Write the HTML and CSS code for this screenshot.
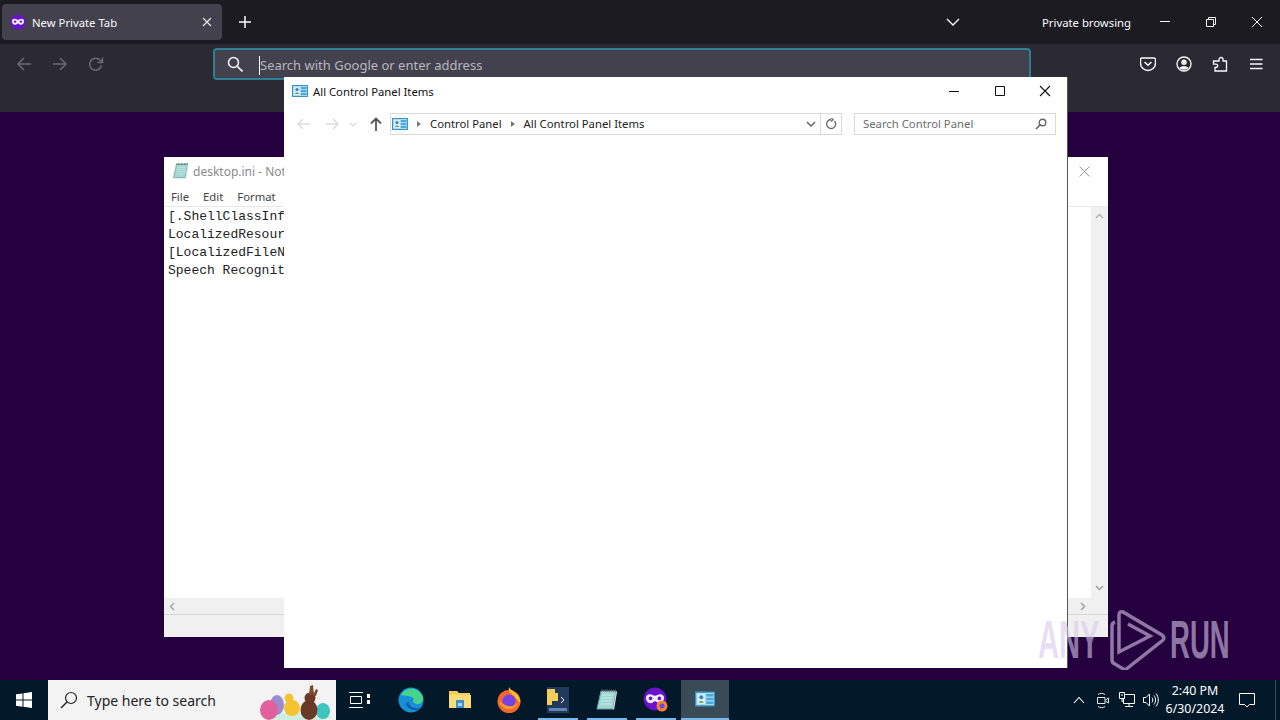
FILE: index.html
```html
<!DOCTYPE html>
<html>

<head>
    <title>New Private Tab</title>
    <link rel="stylesheet" href="styles.css">
</head>

<body>
    <svg class="defs" width="0" height="0">
        <symbol id="cpanel" viewBox="0 0 16 16">
            <rect x="0.5" y="2.5" width="15" height="11" fill="#a7dcf5" stroke="#3b93c4" />
            <rect x="2" y="4" width="6" height="8" fill="#d3eefa" />
            <circle cx="5" cy="6.5" r="1.6" fill="#3f7fb0" />
            <path d="M3 11c.5-2 3.5-2 4 0z" fill="#6b9f3c" />
            <rect x="9" y="4" width="5.5" height="2" fill="#4aa8dc" />
            <rect x="9" y="7" width="5.5" height="2" fill="#4aa8dc" />
            <rect x="9" y="10" width="5.5" height="2" fill="#4aa8dc" />
        </symbol>
        <symbol id="mask" viewBox="0 0 20 20">
            <circle cx="10" cy="10" r="9.5" fill="#6a12c9" />
            <path d="M2.5 9c0-2 1.5-3 3.2-3 1.800 0 3 1.300 4.300 1.300S12.500 6 14.300 6c1.700 0 3.200 1 3.200 3 0 2.500-1.500 4.500-3.700 4.500-1.900 0-2.700-1.700-3.800-1.700s-1.900 1.700-3.800 1.700C4 13.500 2.500 11.500 2.500 9z" fill="#f4ecff" />
            <circle cx="6.3" cy="9.5" r="1.5" fill="#6a12c9" />
            <circle cx="13.7" cy="9.5" r="1.5" fill="#6a12c9" />
        </symbol>
        <symbol id="notepad" viewBox="0 0 24 24">
            <path d="M6 3h15l-3 18H2z" fill="#9fd6d2" stroke="#6f9a9a" />
            <path d="M7 7h11M6.5 10h11M6 13h11M5.500 16h11" stroke="#c8ebe8" fill="none" />
            <path d="M6 2.500h15" stroke="#555" stroke-dasharray="1 1" stroke-width="2" fill="none" />
            <path d="M18 21l3-18 1 1-3 18z" fill="#e4e4e4" />
        </symbol>
    </svg>

    <div class="browser">
        <div class="tabstrip">
            <div class="tab">
                <svg class="tab-icon" width="16" height="16"><use href="#mask" /></svg>
                <span class="tab-title">New Private Tab</span>
                <svg class="tab-close" width="10" height="10" viewBox="0 0 10 10"><path d="M1 1l8 8M9 1l-8 8" stroke="#e6e6e8" stroke-width="1.2" /></svg>
            </div>
            <svg class="new-tab" width="14" height="14" viewBox="0 0 14 14"><path d="M7 1v12M1 7h12" stroke="#fbfbfe" stroke-width="1.5" /></svg>
            <svg class="tab-list" width="14" height="8" viewBox="0 0 14 8"><path d="M1 1l6 6 6-6" stroke="#fbfbfe" stroke-width="1.4" fill="none" /></svg>
            <span class="private-label">Private browsing</span>
            <div class="caption">
                <svg width="46" height="44" viewBox="0 0 46 44"><path d="M18 21.500h10" stroke="#f2f2f2" /></svg>
                <svg width="46" height="44" viewBox="0 0 46 44"><path d="M18.500 19.500h7v7h-7zM20.500 19.500v-2h7v7h-2" stroke="#f2f2f2" fill="none" /></svg>
                <svg width="46" height="44" viewBox="0 0 46 44"><path d="M18 17l10 10M28 17L18 27" stroke="#f2f2f2" /></svg>
            </div>
        </div>

        <div class="toolbar">
            <div class="nav-row">
                <svg class="nav-btn" width="16" height="16" viewBox="0 0 16 16"><path d="M15 8H2M8 2L2 8l6 6" stroke="#6c6b73" stroke-width="1.5" fill="none" /></svg>
                <svg class="nav-btn" width="16" height="16" viewBox="0 0 16 16"><path d="M1 8h13M8 2l6 6-6 6" stroke="#6c6b73" stroke-width="1.5" fill="none" /></svg>
                <svg class="nav-btn" width="16" height="16" viewBox="0 0 16 16"><path d="M13.500 9.500A6 6 0 1 1 12 4l2 2M14.500 1.500V6.500H9.500" stroke="#6c6b73" stroke-width="1.5" fill="none" /></svg>
                <div class="urlbar">
                    <svg class="url-icon" width="16" height="16" viewBox="0 0 16 16"><circle cx="6.500" cy="6.500" r="5" stroke="#fbfbfe" stroke-width="1.5" fill="none" /><path d="M10.500 10.500l5 5" stroke="#fbfbfe" stroke-width="1.6" /></svg>
                    <span class="url-text">Search with Google or enter address</span>
                </div>
                <div class="toolbar-right">
                    <svg width="16" height="16" viewBox="0 0 16 16"><path d="M2 2h12a1.500 1.500 0 0 1 1.500 1.500V7a7.500 7.500 0 0 1-15 0V3.500A1.500 1.500 0 0 1 2 2z" stroke="#fbfbfe" stroke-width="1.4" fill="none" /><path d="M4.500 6L8 9.300 11.500 6" stroke="#fbfbfe" stroke-width="1.5" fill="none" /></svg>
                    <svg width="16" height="16" viewBox="0 0 16 16"><circle cx="8" cy="8" r="7" stroke="#fbfbfe" stroke-width="1.4" fill="none" /><circle cx="8" cy="6.300" r="2.700" fill="#fbfbfe" /><path d="M3.500 12c1-2.200 8-2.200 9 0-2 2.200-7 2.200-9 0z" fill="#fbfbfe" /></svg>
                    <svg width="16" height="16" viewBox="0 0 16 16"><path d="M7 5V3.500a2 2 0 0 1 4 0V5h3.500v10H3v-3.500h1a1.700 1.700 0 0 0 0-3.400H1.500V5z" stroke="#fbfbfe" stroke-width="1.3" fill="none" /></svg>
                    <svg width="16" height="16" viewBox="0 0 16 16"><path d="M2 3.500h12.500M2 8h12.500M2 12.500h12.500" stroke="#fbfbfe" stroke-width="1.4" /></svg>
                </div>
            </div>
        </div>
        <div class="page"></div>
    </div>

    <div class="taskbar">
        <div class="start">
            <svg width="16" height="16" viewBox="0 0 16 16"><path d="M0 2.300l6.500-.9v6.200H0zM7.500 1.300L16 0v7.600H7.500zM0 8.500h6.500v6.200L0 13.800zM7.500 8.500H16V16l-8.500-1.200z" fill="#fff" /></svg>
        </div>
        <div class="search">
            <svg width="18" height="18" viewBox="0 0 18 18"><circle cx="11" cy="7" r="5.500" stroke="#222" stroke-width="1.2" fill="none" /><path d="M7 11l-6 6" stroke="#222" stroke-width="1.4" /></svg>
            <span class="search-text">Type here to search</span>
            <svg class="eggs" width="76" height="36" viewBox="0 0 76 36">
                <ellipse cx="42" cy="33" rx="32" ry="4" fill="#cdeee0" />
                <ellipse cx="19" cy="21" rx="7" ry="10" fill="#9a8ccf" />
                <ellipse cx="11" cy="26" rx="9" ry="10" fill="#e2609e" />
                <circle cx="34" cy="24" r="8" fill="#f5c332" />
                <circle cx="31" cy="14" r="4.500" fill="#f5c332" />
                <ellipse cx="65" cy="27" rx="7" ry="8" fill="#3fc4c0" />
                <ellipse cx="51" cy="26" rx="8.500" ry="10" fill="#6b3a26" />
                <circle cx="52" cy="14" r="5.500" fill="#6b3a26" />
                <path d="M51 11l1-9 3-1 1 10zM55 11l3-6 2 1-2 6z" fill="#7d4a30" />
            </svg>
        </div>
        <div class="task-item task-view">
            <svg width="24" height="16" viewBox="0 0 24 16"><path d="M1 .5h14M1 15.500h14M2.500 4.500h11v7h-11z" stroke="#fff" fill="none" /><path d="M19 2h3v4h-3zM19 8h3v4h-3z" fill="#fff" /></svg>
        </div>
        <div class="task-item">
            <svg width="26" height="26" viewBox="0 0 26 26">
                <circle cx="13" cy="13" r="12.500" fill="#1590d8" />
                <path d="M3 8C6 1 20-2 25 10c1 5-3 8-7 7-3-1-4-3-2-5-3-4-10-3-13-4z" fill="#46d38a" />
                <path d="M8 16c0 4 4 7 9 7 2 0 4-1 5-2-6 1-11-1-11-6z" fill="#0b5fa8" />
            </svg>
        </div>
        <div class="task-item">
            <svg width="22" height="20" viewBox="0 0 22 20">
                <path d="M0 1h8l2 2h11v15H0z" fill="#f2cf5b" />
                <rect x="0" y="5" width="22" height="13" fill="#f8dc78" />
                <rect x="7" y="10" width="8" height="8" fill="#3c8fd0" />
                <rect x="9" y="13" width="4" height="3" fill="#a9d8f5" />
            </svg>
        </div>
        <div class="task-item">
            <svg width="24" height="26" viewBox="0 0 24 26">
                <circle cx="12" cy="14.500" r="11.500" fill="#f4662d" />
                <path d="M12 0c1 3 7 5 10 10 2 4 1 6 1 6L16 8c-2-2-5-3-4-8z" fill="#fbc02d" />
                <circle cx="12" cy="14" r="6.500" fill="#7542e5" />
                <path d="M1 13c2 6 7 10 13 9 4-1 7-4 8-8-2 4-7 6-11 5-4-1-7-3-10-6z" fill="#ff9c2a" />
            </svg>
        </div>
        <div class="task-item running">
            <svg width="24" height="28" viewBox="0 0 24 28">
                <rect x="1" y="1" width="22" height="26" fill="#213a5c" />
                <rect x="3" y="22" width="18" height="3" fill="#5f86b5" />
                <path d="M1 3h8v4h3v8H6v4H1z" fill="#f2cf5b" />
                <path d="M15 11l3 3-3 3" stroke="#fff" fill="none" />
            </svg>
        </div>
        <div class="task-item running">
            <svg width="24" height="24"><use href="#notepad" /></svg>
        </div>
        <div class="task-item running">
            <svg width="26" height="26" viewBox="0 0 26 26">
                <use href="#mask" width="24" height="24" />
                <circle cx="19" cy="19" r="5.500" fill="#f4812d" />
                <circle cx="19" cy="19" r="2.500" fill="#7542e5" />
            </svg>
        </div>
        <div class="task-item active">
            <svg width="20" height="20"><use href="#cpanel" /></svg>
        </div>
        <div class="tray">
            <svg width="16" height="8" viewBox="-2 0 16 8"><path d="M1 7l5-5.500L11 7" stroke="#fff" stroke-width="1.1" fill="none" /></svg>
            <svg width="16" height="16" viewBox="-1 0 16 16"><path d="M1.500 5.500h7.500v6H1.500zM9.500 8l3-2v5l-3-2M2 2.500c2-1.500 5-1.500 7 0M2 14.500c2 1.500 5 1.500 7 0" stroke="#e8e8e8" fill="none" /></svg>
            <svg width="16" height="16" viewBox="0 0 16 16"><path d="M4.500 2.500h11v9h-11zM10 11.500v3M6 14.500h8" stroke="#fff" fill="none" /><path d="M.5 .5h5v6h-5z" fill="#03192a" stroke="#fff" /><path d="M2 3h2M3 6.500v3h2" stroke="#fff" fill="none" /></svg>
            <svg width="16" height="16" viewBox="0 0 16 16"><path d="M.5 5.500h2.500L6.500 2v12L3 10.500H.5z" stroke="#fff" fill="none" /><path d="M9 5.500c1 1.500 1 3.500 0 5M11 3.500c2 2.500 2 6.500 0 9M13 1.500c3 3.500 3 9.500 0 13" stroke="#fff" fill="none" /></svg>
        </div>
        <div class="clock">
            <span>2:40 PM</span>
            <span>6/30/2024</span>
        </div>
        <div class="notify">
            <svg width="16" height="15" viewBox="0 0 16 15"><path d="M.5 .5h15v11h-5L8 14l-2.500-2.500h-5z" stroke="#fff" fill="none" /></svg>
        </div>
        <div class="show-desktop"></div>
    </div>

    <!-- notepad sits behind the control panel -->
    <div class="window notepad">
        <div class="np-title">
            <svg width="18" height="18"><use href="#notepad" /></svg>
            <span class="np-name">desktop.ini - Notepad</span>
            <svg class="np-close" width="11" height="11" viewBox="0 0 11 11"><path d="M.5 .5l10 10M10.500 .5l-10 10" stroke="#9a9a9a" /></svg>
        </div>
        <div class="np-menu">
            <span>File</span>
            <span>Edit</span>
            <span>Format</span>
        </div>
        <div class="np-body">
            <pre class="np-text">[.ShellClassInfo]
LocalizedResourceName=@%SystemRoot%\system32\shell32.dll
[LocalizedFileNames]
Speech Recognition.lnk=@%SystemRoot%\system32\speech</pre>
            <div class="np-vscroll">
                <svg width="9" height="6" viewBox="0 0 9 6"><path d="M1 5l3.500-3.500L8 5" stroke="#b5b5b5" stroke-width="1.5" fill="none" /></svg>
                <svg width="9" height="6" viewBox="0 0 9 6"><path d="M1 1l3.500 3.500L8 1" stroke="#a0a0a0" stroke-width="1.5" fill="none" /></svg>
            </div>
        </div>
        <div class="np-hscroll">
            <svg width="6" height="9" viewBox="0 0 6 9"><path d="M5 1L1.500 4.500 5 8" stroke="#a8a8a8" stroke-width="1.5" fill="none" /></svg>
            <svg width="6" height="9" viewBox="0 0 6 9"><path d="M1 1l3.500 3.500L1 8" stroke="#a0a0a0" stroke-width="1.5" fill="none" /></svg>
        </div>
        <div class="np-status"></div>
    </div>

    <div class="window cpanel">
        <div class="cp-title">
            <svg width="16" height="16"><use href="#cpanel" /></svg>
            <span class="cp-name">All Control Panel Items</span>
            <div class="cp-caption">
                <svg width="46" height="28" viewBox="0 0 46 28"><path d="M18 14.500h10" stroke="#111" /></svg>
                <svg width="46" height="28" viewBox="0 0 46 28"><path d="M18.500 9.500h9v9h-9z" stroke="#111" fill="none" /></svg>
                <svg width="46" height="28" viewBox="0 0 46 28"><path d="M17 9l10 10M27 9L17 19" stroke="#111" stroke-width="1.1" /></svg>
            </div>
        </div>
        <div class="cp-nav">
            <svg class="cp-back" width="14" height="12" viewBox="0 0 14 12"><path d="M14 6H2M7 1L2 6l5 5" stroke="#dcdcdc" stroke-width="1.5" fill="none" /></svg>
            <svg class="cp-fwd" width="14" height="12" viewBox="0 0 14 12"><path d="M0 6h12M7 1l5 5-5 5" stroke="#dcdcdc" stroke-width="1.5" fill="none" /></svg>
            <svg class="cp-down" width="8" height="5" viewBox="0 0 8 5"><path d="M1 1l3 3 3-3" stroke="#dcdcdc" stroke-width="1.2" fill="none" /></svg>
            <svg class="cp-up" width="12" height="14" viewBox="0 0 12 14"><path d="M6 14V2M1 6.500l5-5 5 5" stroke="#555" stroke-width="1.8" fill="none" /></svg>
            <div class="crumbs">
                <svg width="16" height="16"><use href="#cpanel" /></svg>
                <span class="crumb-sep"></span>
                <span class="crumb">Control Panel</span>
                <span class="crumb-sep"></span>
                <span class="crumb">All Control Panel Items</span>
                <svg class="crumb-drop" width="10" height="6" viewBox="0 0 10 6"><path d="M1 1l4 4 4-4" stroke="#666" stroke-width="1.5" fill="none" /></svg>
                <div class="crumb-refresh">
                    <svg width="12" height="12" viewBox="0 0 12 12"><path d="M9.500 3a4.500 4.500 0 1 1-3.500-1.500M6 0l2 1.500L6 3.500" stroke="#666" stroke-width="1.3" fill="none" /></svg>
                </div>
            </div>
            <div class="cp-search">
                <span class="crumb">Search Control Panel</span>
                <svg width="12" height="12" viewBox="0 0 12 12"><circle cx="7.500" cy="4.500" r="3.300" stroke="#666" stroke-width="1.4" fill="none" /><path d="M5 7l-4 4" stroke="#666" stroke-width="1.7" /></svg>
            </div>
        </div>
    </div>

    <div class="watermark">
        <span class="wm-text wm-any">ANY</span>
        <svg width="56" height="60" viewBox="0 0 56 60"><path d="M5 12Q2 13 2 16V50Q2 53 5 54L15 60 53 30Q55 27 52 25L13 2Q9 1 9 5V42L40 26 18 14" stroke="currentColor" stroke-width="3.5" fill="none" /></svg>
        <span class="wm-text wm-run">RUN</span>
    </div>
</body>

</html>
```

FILE: styles.css
```css
html,
body {
    margin: 0;
    padding: 0;
}

body {
    position: relative;
    width: 1280px;
    height: 720px;
    overflow: hidden;
    display: flex;
    flex-direction: column;
    font-family: "Noto Sans", "Open Sans", sans-serif;
    font-size: 11.3px;
    background-color: #25003e;
}

svg {
    display: block;
    flex-shrink: 0;
}

.defs {
    position: absolute;
}

.browser {
    flex: 1;
    display: flex;
    flex-direction: column;
}

.tabstrip {
    height: 44px;
    display: flex;
    align-items: center;
    background-color: #1c1b22;
    color: #fbfbfe;
}

.tab {
    width: 220px;
    height: 36px;
    margin-left: 2px;
    padding: 0 10px 0 8px;
    box-sizing: border-box;
    flex-shrink: 0;
    display: flex;
    align-items: center;
    border-radius: 4px;
    background-color: #42414d;
}

.tab-icon {
    margin-right: 6px;
}

.tab-title {
    flex: 1;
}

.new-tab {
    margin-left: 16px;
}

.tab-list {
    margin-left: 694px;
}

.private-label {
    width: 88px;
    margin-left: 82px;
    flex-shrink: 0;
    white-space: nowrap;
}

.caption {
    display: flex;
    margin-left: 12px;
}

.toolbar {
    height: 68px;
    background-color: #2b2a33;
}

.nav-row {
    display: flex;
    align-items: center;
    height: 40px;
}

.nav-btn {
    margin-left: 20px;
}

.nav-btn:first-child {
    margin-left: 16px;
}

.urlbar {
    width: 818px;
    height: 32px;
    margin-left: 109px;
    padding-left: 12px;
    box-sizing: border-box;
    display: flex;
    align-items: center;
    border: 2px solid #2d7f93;
    border-radius: 4px;
    background-color: #42414d;
}

.url-text {
    margin: 2px 0 0 16px;
    border-left: 1px solid #fbfbfe;
    font-size: 13px;
    line-height: 19px;
    color: #b8b7bd;
}

.toolbar-right {
    display: flex;
    gap: 20px;
    margin-left: 109px;
}

.page {
    flex: 1;
}

.taskbar {
    height: 40px;
    display: flex;
    align-items: stretch;
    background-color: #03192a;
    color: #fff;
}

.start {
    width: 48px;
    display: flex;
    align-items: center;
    justify-content: center;
}

.search {
    width: 288px;
    position: relative;
    padding-left: 12px;
    box-sizing: border-box;
    display: flex;
    align-items: center;
    background-color: #f3f3f3;
    color: #222;
}

.search-text {
    margin-left: 9px;
    font-size: 14px;
}

.eggs {
    position: absolute;
    right: 2px;
    bottom: 0;
}

.task-item {
    width: 49px;
    box-sizing: border-box;
    display: flex;
    align-items: center;
    justify-content: center;
}

.task-view {
    width: 50px;
    padding-right: 2px;
}

.running {
    background-image: linear-gradient(#76b9ed, #76b9ed);
    background-repeat: no-repeat;
    background-size: 40px 2px;
    background-position: center bottom;
}

.active {
    width: 48px;
    margin-left: 1px;
    background-color: #3a4a57;
    border-bottom: 2px solid #76b9ed;
}

.tray {
    display: flex;
    align-items: center;
    gap: 8px;
    margin-left: 342px;
}

.clock {
    width: 68px;
    margin-left: 2px;
    display: flex;
    flex-direction: column;
    align-items: center;
    justify-content: center;
    font-size: 12.4px;
    line-height: 18px;
}

.notify {
    width: 36px;
    display: flex;
    align-items: center;
    justify-content: center;
}

.show-desktop {
    width: 1px;
    margin-left: 10px;
    background-color: #3a4a57;
}

.window {
    position: absolute;
    box-sizing: border-box;
    display: flex;
    flex-direction: column;
    background-color: #fff;
}

.notepad {
    left: 164px;
    top: 157px;
    width: 944px;
    height: 480px;
}

.np-title {
    height: 28px;
    padding: 0 18px 0 8px;
    display: flex;
    align-items: center;
    gap: 3px;
    font-size: 12px;
    color: #8a8a8a;
}

.np-name {
    flex: 1;
}

.np-menu {
    height: 20px;
    padding: 1px 0 0 7px;
    display: flex;
    align-items: center;
    gap: 14px;
    color: #444;
    border-bottom: 1px solid #e8e8e8;
}

.np-body {
    flex: 1;
    display: flex;
    min-height: 0;
}

.np-text {
    flex: 1;
    margin: 0;
    padding: 1px 4px;
    font-family: "Liberation Mono", monospace;
    font-size: 13px;
    line-height: 18px;
    color: #222;
    white-space: pre;
    overflow: hidden;
}

.np-vscroll {
    width: 17px;
    padding: 6px 0 7px;
    box-sizing: border-box;
    display: flex;
    flex-direction: column;
    align-items: center;
    justify-content: space-between;
    background-color: #f0f0f0;
}

.np-hscroll {
    height: 16px;
    padding: 0 22px 0 5px;
    display: flex;
    align-items: center;
    justify-content: space-between;
    background-color: #f0f0f0;
    border-bottom: 1px solid #d8d8d8;
}

.np-status {
    height: 22px;
    background-color: #f0f0f0;
}

.cpanel {
    left: 284px;
    top: 77px;
    width: 784px;
    height: 591px;
    border-right: 1px solid #555;
}

.cp-title {
    height: 28px;
    padding-left: 8px;
    display: flex;
    align-items: center;
    gap: 5px;
    color: #111;
}

.cp-name {
    flex: 1;
}

.cp-caption {
    display: flex;
    margin-right: -2px;
}

.cp-nav {
    height: 22px;
    margin-top: 8px;
    display: flex;
    align-items: center;
    color: #222;
}

.cp-back {
    margin-left: 12px;
}

.cp-fwd {
    margin-left: 16px;
}

.cp-down {
    margin-left: 9px;
}

.cp-up {
    margin-left: 13px;
}

.crumbs {
    width: 452px;
    height: 22px;
    margin-left: 8px;
    padding-left: 1px;
    box-sizing: border-box;
    display: flex;
    align-items: center;
    border: 1px solid #d9d9d9;
}

.crumb {
    margin-bottom: 2px;
}

.crumb-sep {
    width: 0;
    height: 0;
    margin: 0 9px;
    border-left: 4px solid #777;
    border-top: 3px solid transparent;
    border-bottom: 3px solid transparent;
}

.crumb-drop {
    margin-left: auto;
    margin-right: 4px;
}

.crumb-refresh {
    width: 20px;
    height: 100%;
    display: flex;
    align-items: center;
    justify-content: center;
    border-left: 1px solid #d9d9d9;
}

.cp-search {
    width: 202px;
    height: 22px;
    margin-left: 12px;
    padding: 0 8px;
    box-sizing: border-box;
    display: flex;
    align-items: center;
    justify-content: space-between;
    border: 1px solid #d9d9d9;
    color: #6d6d6d;
}

.watermark {
    position: absolute;
    left: 1038px;
    top: 610px;
    display: flex;
    align-items: center;
    gap: 4px;
    color: rgba(215, 200, 235, 0.6);
}

.wm-text {
    font-family: "Liberation Sans", sans-serif;
    font-size: 53px;
    font-weight: bold;
    line-height: 60px;
    display: inline-block;
    width: 68px;
    transform-origin: left center;
}

.wm-any {
    transform: scaleX(0.55);
}

.wm-run {
    transform: scaleX(0.52);
}
```
